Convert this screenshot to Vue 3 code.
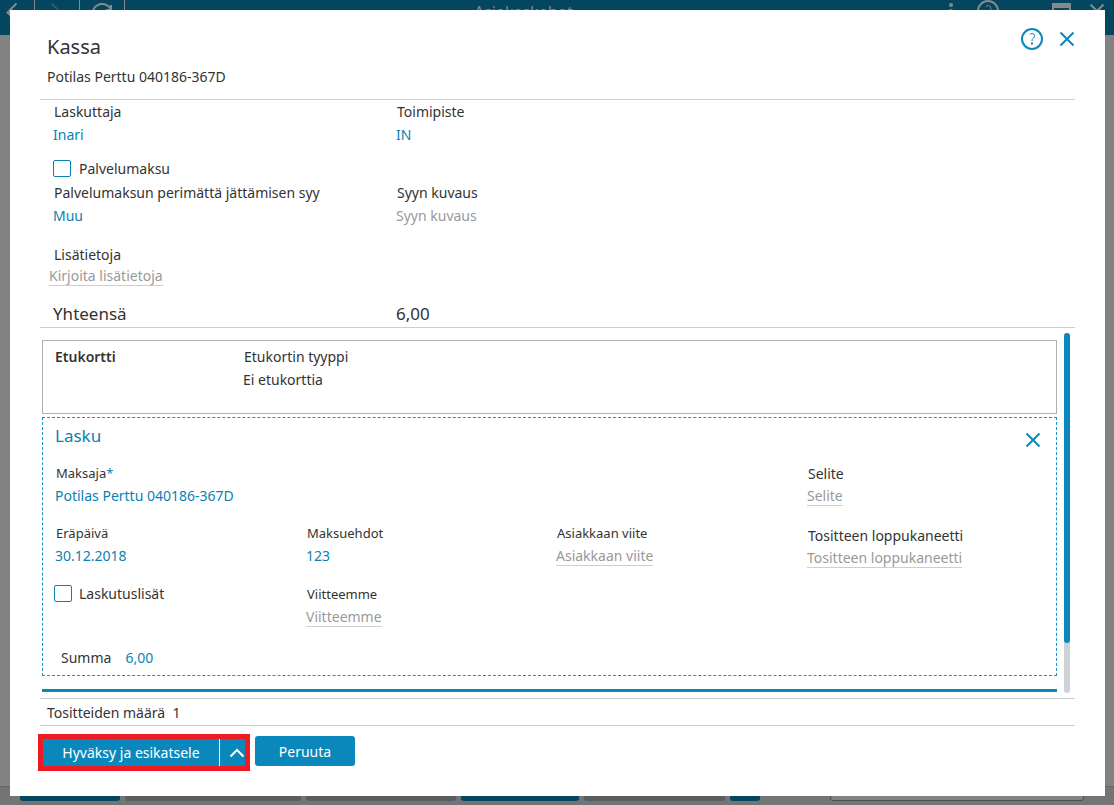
<script setup>
import { ref } from 'vue'

const serviceFee = ref(false)
const billingExtras = ref(false)
const form = ref({
  biller: 'Inari',
  office: 'IN',
  reason: 'Muu',
  description: '',
  notes: '',
  payer: 'Potilas Perttu 040186-367D',
  dueDate: '30.12.2018',
  terms: '123',
  customerRef: '',
  ourRef: '',
  explanation: '',
  closing: '',
  sum: '6,00',
})
</script>

<template>
  <div class="page">
    <header class="topbar">
      <nav class="nav">
        <span class="navcell">
          <svg width="34" height="35" viewBox="0 0 34 35"><path d="M16.500 3.500 7.500 12.500 16.500 21.500M8 12.500H26" /></svg>
        </span>
        <span class="navcell faded">
          <svg width="44" height="35" viewBox="0 0 44 35"><path d="M16.500 3.500 26 12.500 16.500 21.500" /></svg>
        </span>
        <span class="navcell">
          <svg width="44" height="35" viewBox="0 0 44 35"><path d="M31 10A9.500 9.500 0 1 0 31.500 15M31 5V10H26" /></svg>
        </span>
      </nav>
      <span class="apptitle">Asiakaskehot</span>
      <svg class="topicons" width="174" height="35" viewBox="0 0 174 35">
        <g class="solid"><circle cx="11" cy="5" r="2" /><circle cx="11" cy="11" r="2" /><circle cx="11" cy="17" r="2" /></g>
        <circle cx="48" cy="11" r="10" />
        <path class="thin" d="M46 7Q46.500 5.500 48.500 5.500T51 8.500Q51 10 48.500 12V13.500" />
        <path d="M113 4V19H130V4Z" /><path class="thick" d="M112 6H131" />
        <path d="M150.500 4.500 163.500 17.500M163.500 4.500 150.500 17.500" />
      </svg>
    </header>
    <div class="canvas"></div>
    <footer class="bottombar">
      <span class="slab teal w100"></span>
      <span class="slab w176"></span>
      <span class="slab w150"></span>
      <span class="slab teal w118"></span>
      <span class="slab w141"></span>
      <span class="slab teal w30"></span>
      <span class="slab outline"></span>
    </footer>

    <section class="dialog" role="dialog" aria-labelledby="dialog-title">
      <div class="head">
        <div>
          <h1 id="dialog-title">Kassa</h1>
          <p>Potilas Perttu 040186-367D</p>
        </div>
        <div class="headicons">
          <button type="button" class="icon" aria-label="Ohje">
            <svg width="24" height="24" viewBox="0 0 24 24"><circle cx="12" cy="12" r="10" /><path class="thin" d="M9.800 7.500Q10.500 6.500 12 6.500Q14.500 6.500 14.500 8.800Q14.500 10.200 13 11.300Q12 12.200 12 14" /><path d="M12 15.500V17.500" /></svg>
          </button>
          <button type="button" class="icon" aria-label="Sulje">
            <svg width="16" height="24" viewBox="0 0 16 24"><path d="M1.500 5.500 14.500 18.500M14.500 5.500 1.500 18.500" /></svg>
          </button>
        </div>
      </div>

      <div class="basics">
        <div class="pair">
          <div class="field"><label for="biller">Laskuttaja</label><input id="biller" v-model="form.biller" /></div>
          <div class="field"><label for="office">Toimipiste</label><input id="office" v-model="form.office" /></div>
        </div>
        <label class="check"><input v-model="serviceFee" type="checkbox" />Palvelumaksu</label>
        <div class="pair">
          <div class="field"><label for="reason">Palvelumaksun perimättä jättämisen syy</label><input id="reason" v-model="form.reason" /></div>
          <div class="field"><label for="desc">Syyn kuvaus</label><input id="desc" v-model="form.description" disabled placeholder="Syyn kuvaus" /></div>
        </div>
        <div class="field notes"><label for="notes">Lisätietoja</label><input id="notes" v-model="form.notes" class="line" placeholder="Kirjoita lisätietoja" /></div>
        <div class="pair total"><span>Yhteensä</span><span>6,00</span></div>
      </div>

      <div class="scroller">
        <div class="cards">
          <div class="benefit">
            <strong>Etukortti</strong>
            <div><div class="cap">Etukortin tyyppi</div><div>Ei etukorttia</div></div>
          </div>
          <div class="invoice">
            <div class="invoicehead">
              <h2>Lasku</h2>
              <button type="button" class="icon" aria-label="Poista lasku">
                <svg width="16" height="24" viewBox="0 0 16 24"><path d="M1.500 5.500 14.500 18.500M14.500 5.500 1.500 18.500" /></svg>
              </button>
            </div>
            <div class="columns">
              <div class="column small">
                <div class="field"><label for="payer">Maksaja<span class="star">*</span></label><input id="payer" v-model="form.payer" /></div>
                <div class="field"><label for="due">Eräpäivä</label><input id="due" v-model="form.dueDate" /></div>
                <label class="check"><input v-model="billingExtras" type="checkbox" />Laskutuslisät</label>
              </div>
              <div class="column small second">
                <div class="field"><label for="terms">Maksuehdot</label><input id="terms" v-model="form.terms" /></div>
                <div class="field"><label for="ours">Viitteemme</label><input id="ours" v-model="form.ourRef" class="line" placeholder="Viitteemme" /></div>
              </div>
              <div class="column small second">
                <div class="field"><label for="custref">Asiakkaan viite</label><input id="custref" v-model="form.customerRef" class="line" placeholder="Asiakkaan viite" /></div>
              </div>
              <div class="column">
                <div class="field"><label for="expl">Selite</label><input id="expl" v-model="form.explanation" class="line" placeholder="Selite" /></div>
                <div class="field"><label for="closing">Tositteen loppukaneetti</label><input id="closing" v-model="form.closing" class="line" placeholder="Tositteen loppukaneetti" /></div>
              </div>
            </div>
            <div class="sum"><label for="sum">Summa</label><input id="sum" v-model="form.sum" /></div>
          </div>
          <div class="rule"></div>
        </div>
        <div class="track"><div class="thumb"></div></div>
      </div>

      <div class="count">Tositteiden määrä&nbsp; 1</div>

      <div class="actions">
        <div class="split">
          <button type="button" class="main">Hyväksy ja esikatsele</button>
          <button type="button" class="more" aria-label="Lisää toimintoja">
            <svg width="16" height="10" viewBox="0 0 16 10"><path d="M1.500 8.500 8 2 14.500 8.500" /></svg>
          </button>
        </div>
        <button type="button" class="cancel">Peruuta</button>
      </div>
    </section>
  </div>
</template>

<style>
body {
  margin: 0;
}
</style>

<style scoped>
* {
  box-sizing: border-box;
}
.page {
  position: relative;
  display: flex;
  flex-direction: column;
  min-height: 100vh;
  overflow: hidden;
  background: #828282;
  color: #333;
  font: 14px/23px "Segoe UI", "Noto Sans", sans-serif;
}
svg {
  display: block;
  fill: none;
  stroke: currentColor;
  stroke-width: 2;
}
.topbar {
  display: flex;
  height: 35px;
  background: #04465f;
  color: #85898b;
}
.nav {
  display: flex;
  flex: 1;
}
.navcell {
  border-right: 1px solid #85898b;
}
.faded svg {
  opacity: 0.3;
}
.apptitle {
  font-size: 16px;
  line-height: 25px;
}
.topicons {
  flex: 1;
  height: 35px;
}
.topbar .topicons {
  flex: none;
}
.apptitle {
  margin-right: 367px;
}
.topicons {
  margin-left: 0;
}
.topicons .solid {
  fill: currentColor;
  stroke: none;
}
.topicons .thick {
  stroke-width: 4;
}
.canvas {
  flex: 1;
}
.bottombar {
  display: flex;
  gap: 5px;
  height: 19px;
  padding: 0 30px 4px 20px;
  background: #737476;
  border-top: 1px solid #656769;
}
.slab {
  background: #5a5e61;
  border-radius: 0 0 3px 3px;
}
.teal {
  background: #04465f;
}
.w100 { width: 100px; }
.w176 { width: 176px; }
.w150 { width: 150px; }
.w118 { width: 118px; }
.w141 { width: 141px; }
.w30 { width: 30px; }
.outline {
  flex: 1;
  margin-left: 65px;
  background: #828282;
  border: 1px solid #4c4f51;
}
.dialog {
  position: absolute;
  inset: 10px 9px 9px 10px;
  display: flex;
  flex-direction: column;
  padding: 0 30px;
  background: #fff;
}
.head {
  display: flex;
  justify-content: space-between;
  height: 90px;
  padding: 23px 0 0 7px;
  border-bottom: 1px solid #cbcfd2;
}
h1,
h2,
p {
  margin: 0;
  font-weight: 400;
}
h1 {
  font-size: 20px;
  line-height: 28px;
}
.head p {
  padding-top: 4px;
}
.headicons {
  display: flex;
  gap: 15px;
  margin-top: -6px;
}
button {
  padding: 0;
  border: 0;
  background: none;
  color: inherit;
  font: inherit;
}
.icon {
  height: 24px;
  color: #0b88bb;
}
.thin {
  stroke-width: 1;
}
.basics {
  padding-left: 13px;
  border-bottom: 1px solid #cbcfd2;
}
.pair {
  display: grid;
  grid-template-columns: 343fr 679fr;
}
.field {
  display: flex;
  flex-direction: column;
  align-items: flex-start;
}
.field label {
  padding-left: 1px;
}
input {
  field-sizing: content;
  height: 23px;
  margin: 0;
  padding: 0;
  border: 0;
  background: none;
  color: #0b81b3;
  font: inherit;
}
input::placeholder {
  color: #999;
  opacity: 1;
}
.line {
  height: 21px;
  border-bottom: 1px solid #cbcfd2;
}
.check {
  display: flex;
  align-items: center;
  gap: 8px;
}
.check input {
  appearance: none;
  width: 18px;
  height: 17px;
  border: 1px solid #0b81b3;
  border-radius: 2px;
}
.basics .check {
  margin: 11px 0 1px;
}
.notes {
  margin: 16px 0 0 0;
}
.notes .line {
  height: 20px;
  margin-left: -4px;
}
.total {
  margin-top: 14px;
  font-size: 17px;
  line-height: 27px;
}
.scroller {
  display: flex;
  gap: 7px;
  padding: 5px 5px 5px 2px;
}
.cards {
  flex: 1;
  padding: 7px 0 1px;
}
.benefit {
  display: grid;
  grid-template-columns: 188px 1fr;
  height: 74px;
  padding: 4px 12px;
  border: 1px solid #aeb1b4;
}
.benefit strong {
  font-weight: 600;
}
.cap {
  padding-left: 1px;
}
.invoice {
  margin-top: 3px;
  height: 259px;
  padding: 6px 0 0 12px;
  border: 1px dashed #1594c6;
}
.invoicehead {
  display: flex;
  justify-content: space-between;
  height: 38px;
  padding-right: 15px;
}
h2 {
  color: #0b81b3;
  font-size: 17px;
  line-height: 24px;
}
.invoicehead .icon {
  margin-top: 4px;
}
.columns {
  display: grid;
  grid-template-columns: 251fr 250fr 251fr 249fr;
}
.column {
  display: flex;
  flex-direction: column;
  gap: 18px;
}
.small {
  gap: 16px;
}
.second {
  gap: 17px;
  padding-top: 60px;
}
.small .field label {
  font-size: 13px;
}
.small .field input {
  height: 21px;
}
.star {
  color: #0b81b3;
}
.column .check {
  gap: 7px;
  margin-left: -1px;
}
.sum {
  display: flex;
  gap: 14px;
  padding: 19px 0 0 6px;
}
.rule {
  height: 3px;
  margin-top: 13px;
  background: #0b88bb;
}
.track {
  width: 6px;
  border-radius: 3px;
  background: #cdd2d5;
}
.thumb {
  height: 86%;
  border-radius: 3px;
  background: #0b88bb;
}
.count {
  height: 28px;
  padding: 2px 7px 0;
  border: solid #cbcfd2;
  border-width: 1px 0;
}
.actions {
  display: flex;
  align-items: flex-start;
  gap: 5px;
  margin: 8px 0 0 -2px;
}
.split {
  display: flex;
  height: 37px;
  border: 5px solid #ed1c24;
  background: #0b88bb;
  color: #fff;
}
.main {
  width: 176px;
}
.more {
  display: grid;
  place-items: center end;
  width: 26px;
  border-left: 1px solid #fff;
}
.cancel {
  width: 100px;
  height: 30px;
  margin-top: 2px;
  border-radius: 3px;
  background: #0b88bb;
  color: #fff;
}
</style>
